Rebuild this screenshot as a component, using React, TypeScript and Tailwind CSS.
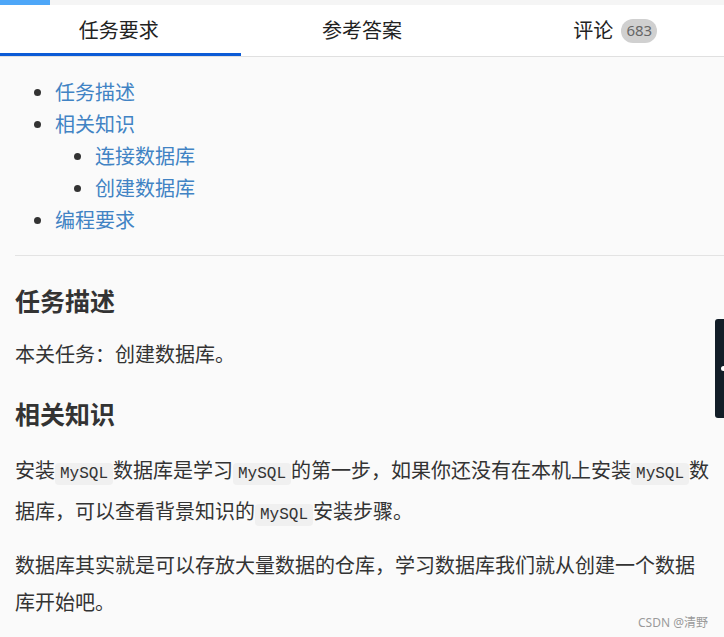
import React from "react"

const code = "rounded-[4px] bg-[#f0f0f0] px-[5px] py-[2px] text-[16px] font-['Liberation_Mono',monospace] text-[#333]"

const Code = ({ children }: { children: React.ReactNode }) => <code className={code}>{children}</code>

export default function App() {
  return (
    <div className="relative min-h-screen bg-[#fafafa] font-['Noto_Sans','Noto_Sans_CJK_SC',sans-serif] text-[#333]">
      {/* progress strip */}
      <div className="h-[5px] bg-[#f5f5f5]">
        <div className="h-full w-[50px] bg-[#4ea7f8]" />
      </div>

      {/* tabs */}
      <div className="grid h-[52px] grid-cols-3 border-b border-[#e0e0e0] bg-white text-[20px] text-[#222]">
        <div className="flex items-center justify-center border-b-[3px] border-[#0b5bd6] pt-[3px] pr-[4px]">任务要求</div>
        <div className="flex items-center justify-center">参考答案</div>
        <div className="flex items-center justify-center gap-[8px] pl-[24px]">
          <span>评论</span>
          <span className="flex h-[24px] w-[36px] items-center justify-center rounded-full bg-[#d0d0d0] text-[15px] text-[#666]">
            683
          </span>
        </div>
      </div>

      <div className="pl-[15px]">
        <ul className="mt-[20px] list-disc pl-[40px] text-[20px] leading-[32px] text-[#4183c4] marker:text-[#333]">
          <li>任务描述</li>
          <li>
            相关知识
            <ul className="list-disc pl-[40px]">
              <li>连接数据库</li>
              <li>创建数据库</li>
            </ul>
          </li>
          <li>编程要求</li>
        </ul>

        <hr className="mt-[18px] border-t border-[#e3e3e3]" />

        <div className="pr-[12px] text-[20px]">
          <h2 className="mt-[27px] text-[25px] font-bold leading-[36px]">任务描述</h2>
          <p className="mt-[17px] leading-[37px]">本关任务：创建数据库。</p>

          <h2 className="mt-[23px] text-[25px] font-bold leading-[36px]">相关知识</h2>
          <p className="mt-[20px] leading-[37px]">
            安装<Code>MySQL</Code>数据库是学习<Code>MySQL</Code>的第一步，如果你还没有在本机上安装<Code>MySQL</Code>数据库，可以查看背景知识的<Code>MySQL</Code>安装步骤。
          </p>
          <p className="mt-[13px] leading-[37px]">
            数据库其实就是可以存放大量数据的仓库，学习数据库我们就从创建一个数据库开始吧。
          </p>
        </div>
      </div>

      {/* side handle */}
      <div className="absolute right-0 top-[319px] flex h-[99px] w-[9px] items-center justify-end rounded-l-[3px] bg-[#121d27]">
        <span className="h-[5px] w-[3px] rounded-l-full bg-white" />
      </div>

      <div className="absolute right-[16px] top-[614px] text-[12px] text-[#9a9a9a]">CSDN @清野</div>
    </div>
  )
}
